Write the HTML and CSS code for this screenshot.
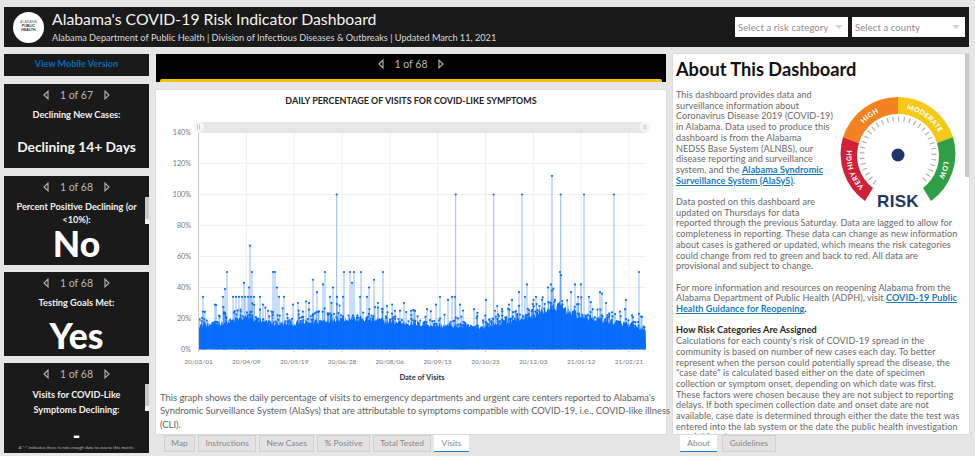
FILE: index.html
```html
<!DOCTYPE html>
<html lang="en">
<head>
<meta charset="utf-8">
<title>Alabama's COVID-19 Risk Indicator Dashboard</title>
<link rel="stylesheet" href="styles.css">
</head>
<body>
<svg class="defs" width="0" height="0" aria-hidden="true">
  <symbol id="tl" viewBox="0 0 6 10"><path d="M5 1.2 L1 5 L5 8.8 Z" fill="none" stroke="currentColor" stroke-width="1.1"/></symbol>
  <symbol id="tr" viewBox="0 0 6 10"><path d="M1 1.2 L5 5 L1 8.8 Z" fill="none" stroke="currentColor" stroke-width="1.1"/></symbol>
</svg>
<div class="page">
  <header class="header">
    <div class="logo"><span class="logo-top">ALABAMA</span><span>PUBLIC</span><span>HEALTH</span></div>
    <div class="titles">
      <h1>Alabama's COVID-19 Risk Indicator Dashboard</h1>
      <p>Alabama Department of Public Health | Division of Infectious Diseases &amp; Outbreaks | Updated March 11, 2021</p>
    </div>
    <div class="selects">
      <div class="select"><span>Select a risk category</span><i class="caret"></i></div>
      <div class="select"><span>Select a county</span><i class="caret"></i></div>
    </div>
  </header>

  <aside class="left">
    <a class="mobile">View Mobile Version</a>
    <section class="card c1">
      <div class="nav"><svg class="tri"><use href="#tl"/></svg><span>1 of 67</span><svg class="tri"><use href="#tr"/></svg></div>
      <div class="label">Declining New Cases:</div>
      <div class="value-md">Declining 14+ Days</div>
    </section>
    <section class="card c2">
      <div class="nav"><svg class="tri"><use href="#tl"/></svg><span>1 of 68</span><svg class="tri"><use href="#tr"/></svg></div>
      <div class="label">Percent Positive Declining (or &lt;10%):</div>
      <div class="value-lg">No</div>
      <div class="scroll s2"></div>
    </section>
    <section class="card c3">
      <div class="nav"><svg class="tri"><use href="#tl"/></svg><span>1 of 68</span><svg class="tri"><use href="#tr"/></svg></div>
      <div class="label">Testing Goals Met:</div>
      <div class="value-lg">Yes</div>
    </section>
    <section class="card c4">
      <div class="clip">
        <div class="nav"><svg class="tri"><use href="#tl"/></svg><span>1 of 68</span><svg class="tri"><use href="#tr"/></svg></div>
        <div class="label tall">Visits for COVID-Like Symptoms Declining:</div>
      </div>
      <div class="dash">-</div>
      <div class="note">A "-" indicates there is not enough data to assess this metric.</div>
      <div class="scroll s4"></div>
    </section>
  </aside>

  <main class="middle">
    <div class="topbar">
      <div class="nav"><svg class="tri"><use href="#tl"/></svg><span>1 of 68</span><svg class="tri"><use href="#tr"/></svg></div>
      <div class="strip"></div>
    </div>
    <section class="chart-card">
      <h2>DAILY PERCENTAGE OF VISITS FOR COVID-LIKE SYMPTOMS</h2>
      <svg id="chart" class="chart" viewBox="156 112 510 272" width="510" height="272">
        <g id="grid"></g>
        <g id="data"></g>
        <g id="axis"></g>
        <rect x="198" y="122" width="447" height="11" fill="#e6e6e6"/>
        <circle cx="198.5" cy="127" r="5.5" fill="#f6f6f6"/>
        <path d="M197.6 124.5v5M199.6 124.5v5" stroke="#bbb" stroke-width=".8"/>
        <circle cx="645" cy="127" r="5.5" fill="#f6f6f6"/>
        <path d="M644 124.5v5M646 124.5v5" stroke="#bbb" stroke-width=".8"/>
        <text x="422" y="380" class="axis-title" text-anchor="middle">Date of Visits</text>
      </svg>
      <p class="caption">This graph shows the daily percentage of visits to emergency departments and urgent care centers reported to Alabama's Syndromic Surveillance System (AlaSys) that are attributable to symptoms compatible with COVID-19, i.e., COVID-like illness (CLI).</p>
    </section>
    <nav class="tabs">
      <span class="tab">Map</span>
      <span class="tab">Instructions</span>
      <span class="tab">New Cases</span>
      <span class="tab">% Positive</span>
      <span class="tab">Total Tested</span>
      <span class="tab active">Visits</span>
    </nav>
  </main>

  <section class="right">
    <article class="about">
      <h2>About This Dashboard</h2>
      <svg class="gauge" viewBox="0 0 124 120" width="124" height="120">
        <defs>
          <path id="t-vh" d="M33.3 99.1 A 46.5 46.5 0 0 1 15.8 46.6"/>
          <path id="t-hi" d="M15.8 46.6 A 46.5 46.5 0 0 1 60 14.5"/>
          <path id="t-mo" d="M60 14.5 A 46.5 46.5 0 0 1 104.2 46.6"/>
          <path id="t-lo" d="M104.2 46.6 A 46.5 46.5 0 0 1 86.7 99.1"/>
        </defs>
        <path d="M27 107 A 58 58 0 0 1 5 43 L 21 49 A 41 41 0 0 0 35 94 Z" fill="#d12136"/>
        <path d="M5 43 A 58 58 0 0 1 60 3 L 60 20 A 41 41 0 0 0 21 49 Z" fill="#f58220"/>
        <path d="M60 3 A 58 58 0 0 1 115 43 L 99 49 A 41 41 0 0 0 60 20 Z" fill="#f5c915"/>
        <path d="M115 43 A 58 58 0 0 1 93 107 L 85 94 A 41 41 0 0 0 99 49 Z" fill="#2f9e44"/>
        <path d="M36.9 88.6 A 36 36 0 1 1 83.1 88.6" fill="none" stroke="#a5a5a5" stroke-width="5" stroke-dasharray="1 4.5"/>
        <circle cx="60" cy="61" r="6.5" fill="#1f3468"/>
        <text class="g-lab"><textPath href="#t-vh" startOffset="50%" text-anchor="middle">VERY HIGH</textPath></text>
        <text class="g-lab"><textPath href="#t-hi" startOffset="50%" text-anchor="middle">HIGH</textPath></text>
        <text class="g-lab"><textPath href="#t-mo" startOffset="50%" text-anchor="middle">MODERATE</textPath></text>
        <text class="g-lab"><textPath href="#t-lo" startOffset="50%" text-anchor="middle">LOW</textPath></text>
        <text class="g-risk" x="60" y="113" text-anchor="middle">RISK</text>
      </svg>
      <p>This dashboard provides data and surveillance information about Coronavirus Disease 2019 (COVID-19) in Alabama. Data used to produce this dashboard is from the Alabama<br>NEDSS Base System (ALNBS), our disease reporting and surveillance system, and the <a>Alabama Syndromic Surveillance System (AlaSyS)</a>.</p>
      <p>Data posted on this dashboard are updated on Thursdays for data reported through the previous Saturday. Data are lagged to allow for completeness in reporting. These data can change as new information about cases is gathered or updated, which means the risk categories could change from red to green and back to red. All data are provisional and subject to change.</p>
      <p>For more information and resources on reopening Alabama from the Alabama Department of Public Health (ADPH), visit <a>COVID-19 Public Health Guidance for Reopening</a><b>.</b></p>
      <p><b class="head">How Risk Categories Are Assigned</b><br>Calculations for each county's risk of COVID-19 spread in the community is based on number of new cases each day. To better represent when the person could potentially spread the disease, the "case date" is calculated based either on the date of specimen collection or symptom onset, depending on which date was first. These factors were chosen because they are not subject to reporting delays. If both specimen collection date and onset date are not available, case date is determined through either the date the test was entered into the lab system or the date the public health investigation was initiated.</p>
      <div class="scroll s-about"></div>
    </article>
    <nav class="tabs right-tabs">
      <span class="tab">About</span>
      <span class="tab">Guidelines</span>
    </nav>
  </section>
</div>
<script src="chart.js"></script>
</body>
</html>
```

FILE: styles.css
```css
* { box-sizing: border-box; }
html, body { margin: 0; padding: 0; }
body {
  width: 975px; height: 456px; overflow: hidden;
  background: #e6e6e6; color: #6b6b6b;
  font-family: "Lato", "Liberation Sans", sans-serif;
}
.defs { position: absolute; }
.page {
  display: grid;
  grid-template-columns: 145px 510px 296px;
  grid-template-rows: 40px 1fr;
  column-gap: 7px; row-gap: 7px;
  padding: 7px 0 0 4px;
  height: 456px;
}
.header {
  grid-column: 1 / 4;
  background: #1a1a1a;
  display: flex; align-items: center;
  padding: 0 4px 0 9px;
}
.logo {
  width: 31px; height: 31px; border-radius: 50%;
  background: #fff; color: #333;
  display: flex; flex-direction: column; align-items: center; justify-content: center;
  font: bold 3.6px/3.9px "Liberation Sans", sans-serif;
}
.logo-top { font-weight: normal; color: #777; }
.titles { margin: 0 0 2px 8px; flex: 1; }
.titles h1 { margin: 0; font-size: 15.8px; line-height: 22px; font-weight: 400; color: #f4f4f4; }
.titles p { margin: 1px 0 0; font-size: 9.2px; line-height: 13px; color: #d8d8d8; }
.selects { display: flex; gap: 4px; }
.select {
  width: 113px; height: 20px; background: #fff;
  display: flex; align-items: center; justify-content: space-between;
  padding: 0 5px 0 3px;
  font-size: 9.4px; color: #8c8c8c; letter-spacing: .15px;
}
.caret { width: 0; height: 0; border-left: 4px solid transparent; border-right: 4px solid transparent; border-top: 4px solid #d4d4d4; }

.left { display: flex; flex-direction: column; }
.mobile {
  height: 22px; background: #1a1a1a; color: #0a6bb5;
  font-size: 9.1px; font-weight: 700; text-align: center; line-height: 19px;
  margin-bottom: 8px;
}
.card {
  background: #1a1a1a; color: #fff; position: relative; overflow: hidden;
  padding-top: 4px;
  display: flex; flex-direction: column; align-items: center;
}
.c1 { height: 84px; margin-bottom: 8px; }
.c2 { height: 89px; margin-bottom: 7px; }
.c3 { height: 84px; margin-bottom: 7px; }
.c4 { height: 90px; }
.nav {
  display: flex; align-items: center; justify-content: center; gap: 11px;
  color: #b9b9b9; font-size: 10.5px; line-height: 14px; height: 14px;
}
.tri { width: 6px; height: 10px; color: #b9b9b9; }
.label {
  font-size: 9.2px; font-weight: 700; line-height: 13px; text-align: center;
  color: #f2f2f2; margin-top: 6px; padding: 0 4px;
}
.value-md { font-size: 13.8px; font-weight: 700; margin-top: 16px; line-height: 20px; color: #f5f5f5; }
.value-lg { font-size: 35.5px; font-weight: 900; line-height: 34px; color: #fff; margin-top: 1px; }
.c3 .value-lg { margin-top: 10px; }
.clip { height: 48px; overflow: hidden; width: 100%; flex: none; }
.tall { line-height: 15px; padding: 0 24px; }
.dash { font-size: 20px; font-weight: 900; line-height: 20px; margin-top: 10px; }
.note { font-size: 4.4px; color: #bbb; line-height: 6px; white-space: nowrap; }
.scroll { position: absolute; right: 0; width: 4px; background: linear-gradient(#c9c9c9 80%, #f0f0f0 80%); }
.s2 { top: 21px; height: 27px; }
.s4 { top: 21px; height: 27px; }

.middle { display: flex; flex-direction: column; }
.topbar { height: 28px; background: #000; margin-bottom: 8px; padding: 3px 4px 0; display: flex; flex-direction: column; justify-content: space-between; }
.strip { height: 3px; background: #f3c300; border-radius: 2px 2px 0 0; }
.chart-card { height: 344px; background: #fff; box-shadow: 0 0 1px #aaa; padding-top: 5px; }
.chart-card h2 {
  margin: 0; text-align: center; font-size: 8.95px; line-height: 12px; font-weight: 700;
  color: #222; height: 17px;
}
.chart { display: block; }
.axis-title { font-size: 7.6px; font-weight: 700; fill: #333; }
.tick { font-size: 7.2px; fill: #777; }
.tick-x { font-size: 6.5px; fill: #777; }
.caption { margin: 7px -5px 0 0; padding: 0 0 0 4px; font-size: 9.4px; line-height: 13.3px; color: #5f5f5f; }
.tabs { display: flex; gap: 3px; padding-left: 8px; margin-top: 1px; }
.tab {
  height: 17px; padding: 0 7.3px; background: #e2e2e2;
  box-shadow: inset 0 0 0 1px #cfcfcf;
  font-size: 8.4px; line-height: 16px; color: #888;
}
.tab.active { background: #fff; box-shadow: none; border-bottom: 1px solid #1f80c2; color: #888; }

.right { display: flex; flex-direction: column; }
.about {
  position: relative; height: 380px; overflow: hidden; background: #fff;
  padding: 0 9px 0 3px; box-shadow: 0 0 1px #aaa;
  font-size: 9.1px; line-height: 10.7px; color: #696969; letter-spacing: .07px;
}
.about h2 { margin: 0; height: 36px; font-size: 18.2px; line-height: 28px; padding-top: 1px; color: #111; font-weight: 700; letter-spacing: 0; }
.about p { margin: 0 0 10.7px; }
.about a { color: #1a7ab8; font-weight: 700; text-decoration: underline; }
.about b { color: #333; }
.about b.head { color: #222; }
.gauge { float: right; margin: 4px -2px 0 5px; }
.g-lab { font-weight: 900; fill: #fff; font-size: 7px; letter-spacing: .3px; }
.g-risk { font-family: "Liberation Sans", sans-serif; font-weight: 700; font-size: 17px; fill: #1f3468; letter-spacing: .3px; }
.s-about { top: 0; height: 123px; width: 4px; background: #c9c9c9; }
.right-tabs { padding-left: 7px; gap: 5px; }
.right-tabs .tab:first-child { background: #fff; box-shadow: none; border-bottom: 1px solid #1f80c2; }
```

FILE: chart.js
```js
(function () {
  var NS = 'http://www.w3.org/2000/svg';
  var seed = 12345;
  function rnd() { seed = (seed * 1664525 + 1013904223) >>> 0; return seed / 4294967296; }
  function el(parent, name, attrs, text) {
    var n = document.createElementNS(NS, name);
    for (var k in attrs) n.setAttribute(k, attrs[k]);
    if (text) n.textContent = text;
    parent.appendChild(n);
    return n;
  }
  function py(p) { return 349.5 - p * 1.55; }
  var grid = document.getElementById('grid');
  var axis = document.getElementById('axis');
  var data = document.getElementById('data');
  var ticks = ['20/03/01','20/04/09','20/05/19','20/06/28','20/08/06','20/09/15','20/10/25','20/12/03','21/01/12','21/02/21'];
  ticks.forEach(function (t, i) {
    var x = 198.5 + i * 47.83;
    if (i) el(grid, 'line', { x1: x, x2: x, y1: 132, y2: 349.5, stroke: '#efefef', 'stroke-width': 1 });
    el(axis, 'line', { x1: x, x2: x, y1: 349.5, y2: 352, stroke: '#ccc', 'stroke-width': 1 });
    el(axis, 'text', { x: x, y: 364, 'text-anchor': 'middle', 'class': 'tick-x' }, t);
  });
  [0, 20, 40, 60, 80, 100, 120, 140].forEach(function (p) {
    if (p) el(grid, 'line', { x1: 198, x2: 646, y1: py(p), y2: py(p), stroke: '#f0f0f0', 'stroke-width': 1 });
    el(axis, 'text', { x: 191, y: py(p) + 2.7, 'text-anchor': 'end', 'class': 'tick' }, p + '%');
  });
  el(axis, 'line', { x1: 198.5, x2: 198.5, y1: 132, y2: 350, stroke: '#ccc', 'stroke-width': 1 });

  var knots = [[198,16],[215,17],[232,19],[250,22],[262,18],[285,17],[310,18],[340,21],[370,20],[400,18],[440,16],[480,15],[508,19],[530,22],[548,27],[560,29],[581,22],[600,20],[625,17],[646,13]];
  function env(x) {
    for (var i = 1; i < knots.length; i++) {
      if (x <= knots[i][0]) {
        var a = knots[i - 1], b = knots[i];
        return a[1] + (b[1] - a[1]) * (x - a[0]) / (b[0] - a[0]);
      }
    }
    return 13;
  }
  var BLUE = '#0a6dfb';
  var d = 'M198.5 349.5';
  for (var x = 198.5; x <= 646; x += 0.8) {
    d += 'L' + x.toFixed(1) + ' ' + py(env(x) * (0.85 + rnd() * 0.25)).toFixed(1);
  }
  d += 'L646 349.5Z';
  el(data, 'path', { d: d, fill: BLUE });

  var spikes = [
    [250,67],[336.7,100],[455.7,100],[493.7,100],[522,100],[552,112],[560.7,100],[584,100],[614,100],
    [203,34],[215,29],[223,34],[225,39],[227,50],[233,34],[236,34],[239,34],[242,34],[245,34],[248,34],[251,34],[254,34],[244,43],[249,40],[252,50],[260,34],[263,29],
    [273,50],[275,50],[277,40],[279,34],[284,34],[293,29],[298,30],[306,31],[309,30],[313,45],[317,37],[323,42],[325,50],[330,34],[333,40],[337,34],[344,50],[343,34],[350,50],[352,43],[354,50],[361,50],[360,34],[367,34],[369,40],[374,45],[378,30],[383,50],[387,28],
    [395,25],[400,25],[404,30],[411,25],[415,25],[427,26],[436,29],[440,34],[448,32],[452,34],[455,34],[460,29],[474,26],[486,32],[495,25],[502,26],[509,29],[512,32],[519,37],[525,34],[527,42],[536,34],[548,40],[551,42],[552,38],[555,32],[560,50],[561,48],[571,37],[575,42],[578,34],[581,42],[589,34],[600,37],[602,36],[606,30],[612,24],[626,32],[625,26],[632,22],[639,50],[642,21]
  ];
  for (var i = 0; i < 320; i++) {
    var sx = 199 + rnd() * 446;
    spikes.push([sx, env(sx) + rnd() * rnd() * 12]);
  }
  spikes.forEach(function (s) {
    var y = py(s[1]);
    el(data, 'line', { x1: s[0], x2: s[0], y1: y, y2: 349.5, stroke: BLUE, 'stroke-opacity': .45, 'stroke-width': 1 });
    el(data, 'circle', { cx: s[0], cy: y, r: 1.1, fill: BLUE });
  });
})();
```
